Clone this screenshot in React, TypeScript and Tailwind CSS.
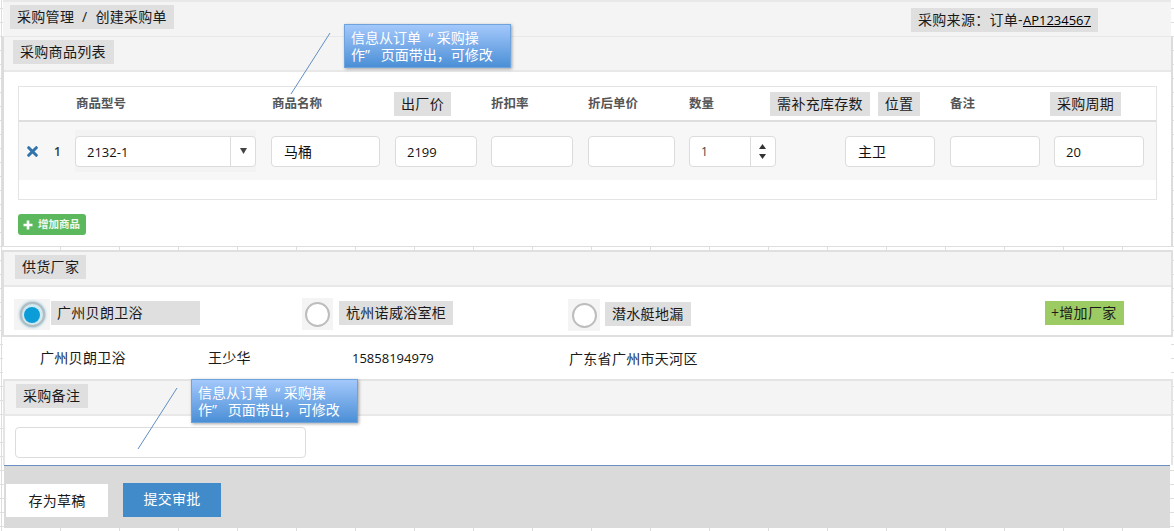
import React from "react";

function Tag({ children, className = "" }: { children: React.ReactNode; className?: string }) {
  return (
    <div className={"bg-[#dfdfdf] h-6 flex items-center text-[14px] leading-none text-[#1a1a1a] tracking-[0.3px] whitespace-nowrap " + className}>
      {children}
    </div>
  );
}

function Field({ value = "", className = "", textClass = "pl-[11px] pt-[3px] font-medium" }: { value?: string; className?: string; textClass?: string }) {
  return (
    <div className={"h-[31px] bg-white border border-[#dcdcdc] rounded-[4px] flex items-center text-[13px] text-[#111] " + textClass + " " + className}>
      {value}
    </div>
  );
}

function Callout({ className = "" }: { className?: string }) {
  return (
    <div className={"absolute w-[167px] h-[44px] border border-[#6fa3dc] bg-gradient-to-b from-[#a3c8fb] to-[#4a8fd6] shadow-[1px_1px_3px_rgba(0,0,0,0.35)] text-white text-[14px] leading-[17px] pl-[6px] pt-[4px] whitespace-nowrap " + className}>
      信息从订单&nbsp;&nbsp;“&nbsp;采购操
      <br />
      作”&nbsp;&nbsp;&nbsp;页面带出，可修改
    </div>
  );
}

function Radio({ on = false }: { on?: boolean }) {
  return on ? (
    <div className="w-[25px] h-[25px] rounded-full border-[2px] border-[#b5bcc0] bg-[#cfeaf3] shadow-[0_0_3px_rgba(60,150,190,0.8)] flex items-center justify-center">
      <div className="w-[16px] h-[16px] rounded-full bg-[#0c9dd8]" />
    </div>
  ) : (
    <div className="w-[25px] h-[25px] rounded-full border-[2px] border-[#bdbdbd] bg-white" />
  );
}

function SectionHead({ children, className = "" }: { children: React.ReactNode; className?: string }) {
  return (
    <div className={"h-[35px] bg-[#f4f4f4] border-b-2 border-[#e8e8e8] flex items-start pt-[3px] " + className}>
      {children}
    </div>
  );
}

const headText = "text-[12.5px] font-semibold text-[#555] leading-none self-center pt-[2px]";

export default function App() {
  return (
    <div className="relative w-[1174px] h-[531px] overflow-hidden bg-white bg-[linear-gradient(#dedede_1px,transparent_1px),linear-gradient(90deg,#dedede_1px,transparent_1px)] bg-[size:59px_14px] bg-[position:1px_8px] font-['Open_Sans','Noto_Sans_CJK_SC',sans-serif] flex flex-col">
      <div className="h-[37px] ml-[3px] mr-[3px] bg-[#f4f4f4] border-t-2 border-b border-[#e8e8e8] flex justify-between items-start pt-[3px] pl-[7px] pr-[73px]">
        <Tag className="w-[164px] pl-[7px]">采购管理&nbsp;&nbsp;/&nbsp;&nbsp;创建采购单</Tag>
        <Tag className="w-[187px] pl-[7px] mt-[3px]">
          采购来源：订单-<span className="underline text-[13px] tracking-normal text-black">AP1234567</span>
        </Tag>
      </div>

      <section className="h-[209px] ml-[2px] mr-[1px] border-l-2 border-r-2 border-[#dcdcdc] bg-white flex flex-col">
        <SectionHead className="pl-[9px]">
          <Tag className="w-[101px] pl-[7px]">采购商品列表</Tag>
        </SectionHead>
        <div className="flex-1 flex flex-col pl-[14px] pt-[14px]">
          <div className="w-[1139px] h-[114px] border border-[#e4e4e4] flex flex-col">
            <div className="h-[35px] border-b-2 border-[#dedede] grid grid-cols-[57px_196px_122px_97px_97px_101px_81px_108px_72px_100px_1fr] items-center">
              <span />
              <span className={headText}>商品型号</span>
              <span className={headText}>商品名称</span>
              <Tag className="w-[57px] justify-center">出厂价</Tag>
              <span className={headText}>折扣率</span>
              <span className={headText}>折后单价</span>
              <span className={headText}>数量</span>
              <Tag className="w-[100px] justify-center">需补充库存数</Tag>
              <Tag className="w-[42px] justify-center">位置</Tag>
              <span className={headText}>备注</span>
              <Tag className="w-[71px] justify-center">采购周期</Tag>
            </div>
            <div className="h-[58px] bg-[#f7f7f7] pl-[8px] grid grid-cols-[27px_22px_196px_123px_96px_97px_101px_156px_105px_104px_1fr] items-center">
              <svg width="11" height="11" viewBox="0 0 11 11" aria-hidden="true">
                <path d="M1.7 1.7 9.3 9.3M9.3 1.7 1.7 9.3" stroke="#2f74ad" strokeWidth="3" strokeLinecap="round" />
              </svg>
              <span className="text-[12px] font-semibold text-[#333] pt-[2px]">1</span>
              <div className="w-[181px] h-[42px] -ml-[1px] bg-[#f3f3f3] flex items-center">
                <div className="w-[181px] h-[31px] bg-white border border-[#dcdcdc] rounded-[4px] flex items-center text-[13px] font-medium text-[#111]">
                  <span className="w-[155px] pl-[11px] pt-[3px] h-full flex items-center border-r border-[#dcdcdc]">2132-1</span>
                  <svg className="ml-[9px]" width="7" height="6" viewBox="0 0 7 6" aria-hidden="true"><path d="M0 0h7L3.5 6z" fill="#444" /></svg>
                </div>
              </div>
              <Field value="马桶" className="w-[109px] -ml-[1px]" textClass="pl-[12px] text-[14px]" />
              <Field value="2199" className="w-[82px]" />
              <Field className="w-[82px]" />
              <Field className="w-[87px]" />
              <div className="w-[87px] h-[31px] bg-white border border-[#dcdcdc] rounded-[4px] flex items-center text-[12px] text-[#444]">
                <span className="w-[61px] pl-[11px] pt-[1px] h-full flex items-center border-r border-[#dcdcdc]">1</span>
                <div className="ml-[8px] flex flex-col gap-[5px]">
                  <svg width="7" height="5" viewBox="0 0 7 5" aria-hidden="true"><path d="M0 5h7L3.5 0z" fill="#333" /></svg>
                  <svg width="7" height="5" viewBox="0 0 7 5" aria-hidden="true"><path d="M0 0h7L3.5 5z" fill="#333" /></svg>
                </div>
              </div>
              <Field value="主卫" className="w-[90px]" textClass="pl-[12px] text-[14px]" />
              <Field className="w-[90px]" />
              <Field value="20" className="w-[90px]" />
            </div>
          </div>
          <div className="mt-[14px] w-[68px] h-[21px] rounded-[3px] bg-[#5cb85c] flex items-center pl-[5px] gap-[5px] text-[#eef8ee] text-[10.5px] font-bold leading-none whitespace-nowrap">
            <svg width="10" height="10" viewBox="0 0 10 10" aria-hidden="true"><path d="M5 0.5v9M0.5 5h9" stroke="#fff" strokeWidth="2.6" /></svg>
            增加商品
          </div>
        </div>
      </section>

      <section className="mt-[4px] h-[87px] ml-[2px] mr-[1px] border-t-2 border-b-2 border-l-2 border-r-2 border-[#dfdfdf] bg-white flex flex-col">
        <SectionHead className="pl-[11px] h-[35px]">
          <Tag className="w-[71px] pl-[7px]">供货厂家</Tag>
        </SectionHead>
        <div className="h-[48px] flex items-start pl-[10px]">
          <div className="w-[36px] h-[31px] mt-[12px] bg-[#f4f4f4] flex items-center justify-center"><Radio on /></div>
          <Tag className="w-[149px] pl-[6px] mt-[14px] ml-[1px]">广州贝朗卫浴</Tag>
          <div className="w-[31px] h-[32px] mt-[11px] ml-[102px] bg-[#f4f4f4] flex items-center justify-center"><Radio /></div>
          <Tag className="w-[114px] pl-[7px] mt-[14px] ml-[6px]">杭州诺威浴室柜</Tag>
          <div className="w-[32px] h-[32px] mt-[12px] ml-[115px] bg-[#f4f4f4] flex items-center justify-center"><Radio /></div>
          <Tag className="w-[86px] pl-[7px] mt-[15px] ml-[5px]">潜水艇地漏</Tag>
          <Tag className="w-[79px] pl-[6px] mt-[14px] ml-[354px] !bg-[#9ccb63]">+增加厂家</Tag>
        </div>
      </section>

      <div className="h-[42px] ml-[3px] mr-[3px] bg-white flex items-center text-[14px] tracking-[0.3px] text-[#1a1a1a] leading-none pl-[37px]">
        <span className="w-[168px] pb-[1px]">广州贝朗卫浴</span>
        <span className="w-[144px]">王少华</span>
        <span className="w-[217px] text-[13px] font-medium text-[#111] tracking-normal pt-[1px]">15858194979</span>
        <span className="pt-[1px]">广东省广州市天河区</span>
      </div>

      <section className="h-[86px] ml-[3px] mr-[1px] border-t-2 border-l-2 border-r-2 border-[#e4e4e4] bg-white flex flex-col">
        <SectionHead className="pl-[11px] h-[35px]">
          <Tag className="w-[72px] pl-[7px]">采购备注</Tag>
        </SectionHead>
        <div className="pl-[10px] pt-[11px]">
          <Field className="w-[291px]" />
        </div>
      </section>

      <div className="h-[63px] ml-[4px] mr-[4px] border-t border-[#6a8fc0] bg-[#dadada] flex items-start pl-[2px] pt-[17px]">
        <div className="w-[102px] h-[33px] mt-[1px] bg-white flex items-center justify-center text-[14px] tracking-[0.3px] text-[#1a1a1a]">存为草稿</div>
        <div className="w-[98px] h-[34px] ml-[15px] pb-[3px] bg-[#428bca] flex items-center justify-center text-[14px] tracking-[0.3px] text-white">提交审批</div>
      </div>

      <svg className="absolute left-0 top-0 pointer-events-none" width="1174" height="531" aria-hidden="true">
        <path d="M330 33 291 94M177 388 138 449" stroke="#5f8fc4" strokeWidth="1" fill="none" />
      </svg>
      <Callout className="left-[344px] top-[24px]" />
      <Callout className="left-[191px] top-[379px]" />
    </div>
  );
}
